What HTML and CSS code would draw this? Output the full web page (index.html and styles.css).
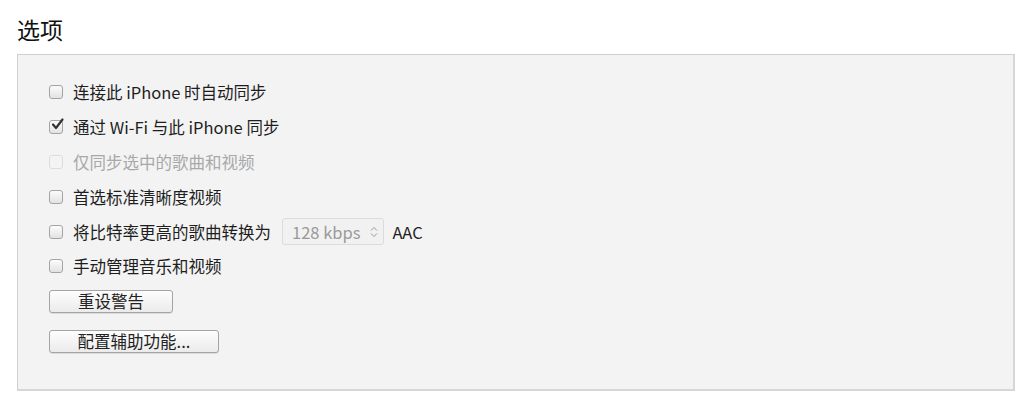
FILE: index.html
```html
<!DOCTYPE html>
<html lang="zh-CN">
<head>
  <meta charset="UTF-8" />
  <title>选项</title>
  <link rel="stylesheet" href="styles.css">
</head>
<body>

<div id="options">
  <div id="options-heading">选项</div>

  <div id="options-box">
    <label class="opt-row">
      <span class="check-box"></span>
      <span>连接此 iPhone 时自动同步</span>
    </label>
    <label class="opt-row">
      <span class="check-box checked">
        <svg viewBox="0 0 14 14" width="14" height="14"><path d="M3 6.5 L6 10 L12.5 1.5" fill="none" stroke="#333" stroke-width="2.2" stroke-linecap="round" stroke-linejoin="round"/></svg>
      </span>
      <span>通过 Wi-Fi 与此 iPhone 同步</span>
    </label>
    <label class="opt-row disabled">
      <span class="check-box"></span>
      <span>仅同步选中的歌曲和视频</span>
    </label>
    <label class="opt-row">
      <span class="check-box"></span>
      <span>首选标准清晰度视频</span>
    </label>
    <label class="opt-row">
      <span class="check-box"></span>
      <span>将比特率更高的歌曲转换为</span>
      <span class="rate-select">128 kbps
        <svg viewBox="0 0 8 12" width="8" height="12"><path d="M1 4.5 L4 1.5 L7 4.5 M1 7.5 L4 10.5 L7 7.5" fill="none" stroke="#999" stroke-width="1"/></svg>
      </span>
      <span>AAC</span>
    </label>
    <label class="opt-row">
      <span class="check-box"></span>
      <span>手动管理音乐和视频</span>
    </label>

    <div class="btn-col">
      <button class="opt-btn" id="reset-btn">重设警告</button>
      <button class="opt-btn" id="access-btn">配置辅助功能...</button>
    </div>
  </div>
</div>

</body>
</html>
```

FILE: styles.css
```css
body {
  margin: 0;
  background: #fff;
  color: #222;
  font-family: "Noto Sans CJK SC", "Open Sans", sans-serif;
}

#options {
  padding: 15px 9px 0 17px;
}

#options-heading {
  font-size: 23px;
  line-height: 28px;
  color: #111;
  margin-bottom: 11px;
}

#options-box {
  height: 337px;
  box-sizing: border-box;
  background: #f3f3f3;
  border: 1px solid #cfcfcf;
  border-right: 2px solid #d6d6d6;
  border-bottom: 2px solid #d6d6d6;
  padding: 20px 0 0 31px;
}

.opt-row {
  display: flex;
  align-items: center;
  height: 34.8px;
  font-size: 16.5px;
  color: #1e1e1e;
}

.opt-row.disabled {
  color: #a8a8a8;
}

.check-box {
  width: 14px;
  height: 14px;
  margin: 0 10px 0 0;
  box-sizing: border-box;
  border: 1px solid #a4a4a4;
  border-radius: 3px;
  background: linear-gradient(#fcfcfc, #e2e2e2);
  display: flex;
  align-items: center;
  justify-content: center;
  position: relative;
}

.check-box svg {
  position: absolute;
  left: 0;
  top: -3px;
}

.disabled .check-box {
  border-color: #dcdcdc;
  background: #f4f4f4;
}

.rate-select {
  display: inline-flex;
  align-items: center;
  gap: 10px;
  height: 27px;
  box-sizing: border-box;
  margin: 0 8px 0 11px;
  padding: 0 5px 0 9px;
  border: 1px solid #dcdcdc;
  border-radius: 3px;
  background: #f1f1f1;
  color: #9a9a9a;
}

.btn-col {
  display: flex;
  flex-direction: column;
  align-items: flex-start;
  gap: 17px;
  margin-top: 6px;
}

.opt-btn {
  height: 23px;
  padding: 0;
  font-family: inherit;
  font-size: 16.5px;
  line-height: 21px;
  color: #222;
  border: 1px solid #a4a4a4;
  border-radius: 3px;
  background: linear-gradient(#fdfdfd, #ebebeb);
  box-shadow: 0 1px 0 #dcdcdc;
  cursor: pointer;
}

#reset-btn {
  width: 124px;
}

#access-btn {
  width: 170px;
}
```
